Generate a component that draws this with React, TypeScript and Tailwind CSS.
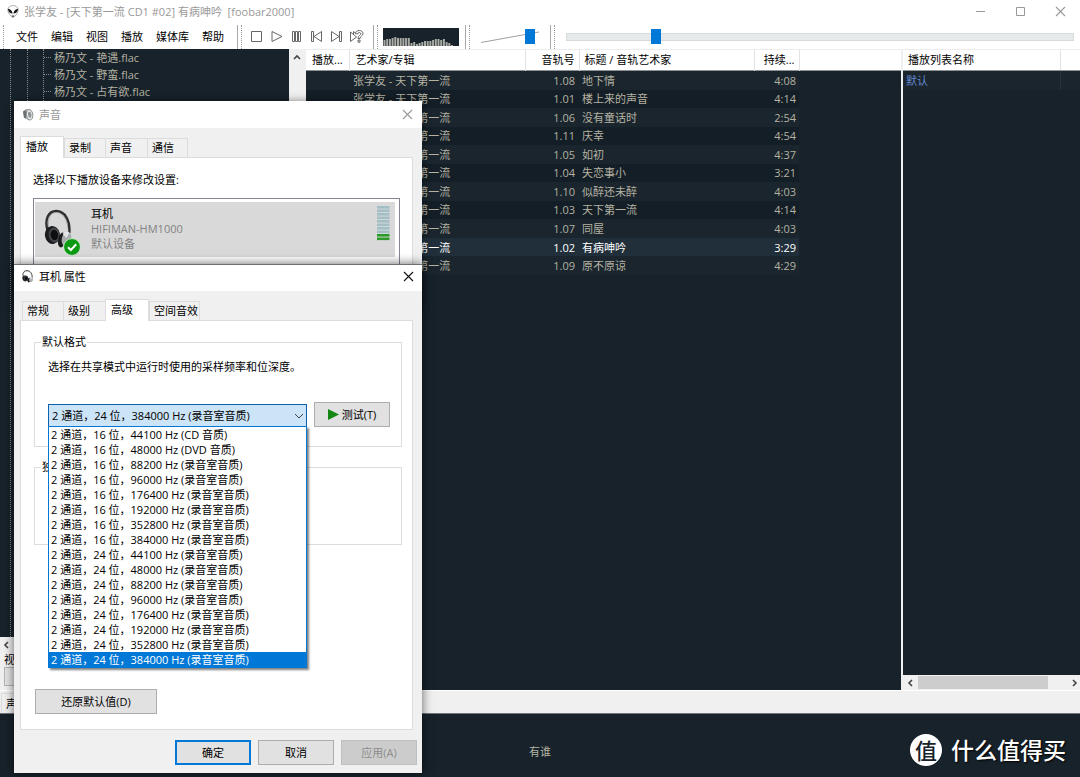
import React from "react";

type Track = { no: string; title: string; time: string; playing?: boolean };

const tracks: Track[] = [
  { no: "1.08", title: "地下情", time: "4:08" },
  { no: "1.01", title: "楼上来的声音", time: "4:14" },
  { no: "1.06", title: "没有童话时", time: "2:54" },
  { no: "1.11", title: "庆幸", time: "4:54" },
  { no: "1.05", title: "如初", time: "4:37" },
  { no: "1.04", title: "失恋事小", time: "3:21" },
  { no: "1.10", title: "似醉还未醉", time: "4:03" },
  { no: "1.03", title: "天下第一流", time: "4:14" },
  { no: "1.07", title: "同屋", time: "4:03" },
  { no: "1.02", title: "有病呻吟", time: "3:29", playing: true },
  { no: "1.09", title: "原不原谅", time: "4:29" },
];

const studioRates = ["88200", "96000", "176400", "192000", "352800", "384000"];
const formats: string[] = [
  "2 通道，16 位，44100 Hz (CD 音质)",
  "2 通道，16 位，48000 Hz (DVD 音质)",
  ...studioRates.map((r) => `2 通道，16 位，${r} Hz (录音室音质)`),
  ...["44100", "48000", ...studioRates].map((r) => `2 通道，24 位，${r} Hz (录音室音质)`),
];
const selectedFormat = formats[formats.length - 1];

const spectrum = [6, 7, 7, 8, 9, 8, 8, 8, 8, 8, 3, 4, 2, 3, 4, 5, 5, 5, 6, 7, 7, 6, 7, 4, 3, 1];

function AlienIcon() {
  return (
    <svg width="12" height="13" viewBox="0 0 12 13" aria-hidden="true">
      <path d="M6 .6C3 .6.8 2.2.8 4.8c0 2.800 2.600 6.600 5.200 7.600 2.600-1 5.200-4.800 5.200-7.600C11.200 2.200 9 .6 6 .6z" fill="#fff" stroke="#9a9a9a" strokeWidth=".8" />
      <path d="M.9 3.800c2.600.2 4.500 2 4.700 4.800-2.600.1-4.500-1.800-4.700-4.800zM11.100 3.800c-2.600.2-4.500 2-4.700 4.800 2.600.1 4.500-1.800 4.700-4.800z" fill="#1a1a1a" />
      <path d="M4.400 10.600h3.200L6 12.400z" fill="#444" />
    </svg>
  );
}

function SpeakerIcon() {
  return (
    <svg width="12" height="13" viewBox="0 0 12 13" aria-hidden="true">
      <path d="M1 3.500 4 .8l5 .6 2.200 4-.8 4.800-3.600 2.200L2 9.800z" fill="#b9bcbe" />
      <ellipse cx="7.600" cy="6.800" rx="3.200" ry="5.200" fill="#e8eaeb" stroke="#777" strokeWidth=".7" transform="rotate(-8 7.600 6.800)" />
      <ellipse cx="7.700" cy="6.800" rx="1.700" ry="3" fill="#8f9598" transform="rotate(-8 7.700 6.800)" />
      <path d="M1 3.500 4.200 2 4 10.500 2 9.800z" fill="#6c7073" />
    </svg>
  );
}

function Headphones({ width, height }: { width: number; height: number }) {
  return (
    <svg width={width} height={height} viewBox="0 0 32 40" preserveAspectRatio="none" aria-hidden="true">
      <path d="M4 22C0 10 5 2 13 2c9 0 15 9 14 22" fill="none" stroke="#2d2e30" strokeWidth="2.600" />
      <path d="M5 19C3 10 7 3.400 13 3.400c7 0 12 7 12.500 16" fill="none" stroke="#8b8c8e" strokeWidth=".7" />
      <ellipse cx="9" cy="26" rx="8" ry="9" fill="#1c1d1f" transform="rotate(-12 9 26)" />
      <ellipse cx="11" cy="26" rx="6" ry="7.500" fill="#45474a" transform="rotate(-12 11 26)" />
      <ellipse cx="11" cy="26" rx="4" ry="5.200" fill="#0d0e0f" transform="rotate(-12 11 26)" />
      <ellipse cx="19" cy="31" rx="4" ry="7.500" fill="#1b1c1e" transform="rotate(12 19 31)" />
      <ellipse cx="24" cy="30" rx="5" ry="7.500" fill="#a9acaf" transform="rotate(14 24 30)" />
      <path d="M20 25c2-3 6-3 7-1l-3 5z" fill="#e2e4e6" />
    </svg>
  );
}

function CheckBadge() {
  return (
    <svg width="18" height="18" viewBox="0 0 18 18" aria-hidden="true">
      <circle cx="9" cy="9" r="8.400" fill="#0c9a12" stroke="#dff0df" strokeWidth=".8" />
      <path d="m5 9.200 2.900 2.800L13.200 6.300" fill="none" stroke="#fff" strokeWidth="2" />
    </svg>
  );
}

function Cross({ color }: { color: string }) {
  return (
    <svg width="11" height="11" viewBox="0 0 11 11" aria-hidden="true">
      <path d="m1 1 9 9M10 1l-9 9" stroke={color} strokeWidth="1.100" />
    </svg>
  );
}

function Chevron({ dir }: { dir: "left" | "right" | "up" | "down" }) {
  const paths = { left: "M7 2 4 5l3 3", right: "m3 2 3 3-3 3", up: "m2 7 3-3 3 3", down: "m1 3 4 4 4-4" };
  return (
    <svg width="10" height="10" viewBox="0 0 10 10" aria-hidden="true">
      <path d={paths[dir]} fill="none" stroke="#444" strokeWidth={dir === "down" ? 1 : 1.600} />
    </svg>
  );
}

function Gripper({ bar = true }: { bar?: boolean }) {
  return (
    <div aria-hidden="true" className="flex h-6 shrink-0 items-stretch gap-[3px]">
      {bar && <div className="w-px bg-[#a8a8a8]" />}
      <div className="border-l border-dotted border-[#9a9a9a]" />
    </div>
  );
}

const transport: { label: string; art: React.ReactNode }[] = [
  { label: "停止", art: <path d="M1.500 1.500h10v10h-10z" /> },
  { label: "播放", art: <path d="M2 1.500v10L12 6.500z" /> },
  { label: "暂停", art: <path d="M2.500 1.500h2v10h-2zM5.500 1.500h2v10h-2zM8.500 1.500h2v10h-2z" /> },
  { label: "上一首", art: <path d="M1.500 1.500h2v10h-2zM11.500 1.500v10L4 6.500z" /> },
  { label: "下一首", art: <path d="M9.500 1.500h2v10h-2zM1.500 1.500v10L9 6.500z" /> },
  {
    label: "随机",
    art: (
      <>
        <path d="M.5 2v9.500L6.500 7zM3.500 4V1.500l2.500 2" />
        <path d="M5.500 3.500c0-4 7.500-4 7.500 0 0 2.500-3 2.500-3 5H8c0-3 2.800-3.200 2.800-4.800 0-1.600-3-1.600-3 .3zM8 10h2v2.200H8z" />
      </>
    ),
  },
];

function Toolbar() {
  return (
    <div className="flex h-[25px] shrink-0 items-center bg-white">
      <div className="flex w-[237px] shrink-0 items-center pl-[3px]">
        <Gripper bar={false} />
        <nav className="flex gap-[13px] pl-3 text-black">
          {["文件", "编辑", "视图", "播放", "媒体库", "帮助"].map((m) => (
            <button key={m} type="button">{m}</button>
          ))}
        </nav>
      </div>
      <div className="flex w-[136px] shrink-0 items-center">
        <Gripper />
        <div className="flex pl-[5px]">
          {transport.map((t) => (
            <button key={t.label} type="button" aria-label={t.label} className="flex h-5 w-[20px] items-center justify-center">
              <svg width="14" height="13" viewBox="0 0 14 13" fill="none" stroke="#666" strokeWidth="1">{t.art}</svg>
            </button>
          ))}
        </div>
      </div>
      <div className="flex w-[92px] shrink-0 items-center">
        <Gripper />
        <svg className="ml-[5px]" width="76" height="18" viewBox="0 0 76 18" aria-hidden="true">
          <path d="M0 0h76v18H0z" fill="#17222a" />
          {spectrum.map((h, i) => (
            <rect key={i} x={i * 2.700 + 0.500} y={18 - h} width="2" height={h} fill="#a9aba4" />
          ))}
        </svg>
      </div>
      <div className="flex w-[85px] shrink-0 items-center">
        <Gripper />
        <div className="relative ml-[11px] h-[15px] w-[60px]">
          <svg className="h-[15px] w-[60px]" viewBox="0 0 60 15" aria-hidden="true">
            <path d="M0 13.500 58 3" stroke="#a0a0a0" />
          </svg>
          <input
            type="range"
            aria-label="音量"
            defaultValue={88}
            className="absolute inset-0 h-[15px] w-[60px] appearance-none bg-transparent [&::-webkit-slider-thumb]:h-[15px] [&::-webkit-slider-thumb]:w-[10px] [&::-webkit-slider-thumb]:appearance-none [&::-webkit-slider-thumb]:bg-[#0078d7]"
          />
        </div>
      </div>
      <div className="flex min-w-0 flex-1 items-center pr-[6px]">
        <Gripper />
        <input
          type="range"
          aria-label="播放进度"
          defaultValue={17}
          step={0.5}
          className="ml-[11px] h-[8px] min-w-0 flex-1 appearance-none border border-[#d6dada] bg-[#e7eaea] [&::-webkit-slider-thumb]:h-[15px] [&::-webkit-slider-thumb]:w-[10px] [&::-webkit-slider-thumb]:appearance-none [&::-webkit-slider-thumb]:bg-[#0078d7]"
        />
      </div>
    </div>
  );
}

function LibraryTree() {
  return (
    <div className="flex w-[306px] shrink-0 flex-col bg-[#f0f0f0]">
      <div className="flex min-h-0 flex-1">
        <div className="flex flex-1 bg-[#17222a] pl-[10px]">
          <div className="w-[17px] border-l border-dotted border-[#87898a]" />
          <div className="w-4 border-l border-dotted border-[#87898a]" />
          <ul className="flex-1 border-l border-dotted border-[#87898a] text-[#b4b2a3]">
            {["艳遇", "野蛮", "占有欲"].map((s) => (
              <li key={s} className="flex h-[17px] items-center gap-[3px]">
                <span className="w-[7px] border-t border-dotted border-[#87898a]" />
                杨乃文 - {s}.flac
              </li>
            ))}
          </ul>
        </div>
        <div className="w-[17px] pt-[3px] pl-[3px]"><Chevron dir="up" /></div>
      </div>
      <div className="flex h-[15px] items-center pl-px"><Chevron dir="left" /></div>
      <div className="h-[15px] pl-1 leading-[15px]">视图</div>
      <div className="flex h-[23px] pl-1">
        <button type="button" aria-label="视图选择" className="h-[19px] w-[120px] border border-[#b5b5b5] bg-[#e4e4e4]" />
      </div>
    </div>
  );
}

const headCell = "border-r border-[#e2e2e2] font-normal";

function Playlist() {
  return (
    <div className="flex min-w-0 flex-1 flex-col bg-[#17222a]">
      <div className="bg-white">
        <div className="h-[22px] border-t border-b border-t-[#ececec] border-b-[#8d9295]" />
      </div>
      <table className="-mt-[22px] w-[493px] table-fixed border-collapse">
        <colgroup>
          <col className="w-[43px]" />
          <col className="w-[176px]" />
          <col className="w-[54px]" />
          <col className="w-[175px]" />
          <col className="w-[45px]" />
        </colgroup>
        <thead>
          <tr className="h-[22px] whitespace-nowrap text-black">
            <th className={`${headCell} pb-[2px] pl-[6px] text-left`}>播放...</th>
            <th className={`${headCell} pb-[2px] pl-[6px] text-left`}>艺术家/专辑</th>
            <th className={`${headCell} pr-1 pb-[2px] text-right`}>音轨号</th>
            <th className={`${headCell} pb-[2px] pl-[5px] text-left`}>标题 / 音轨艺术家</th>
            <th className={`${headCell} pr-1 pb-[2px] text-right`}>持续...</th>
          </tr>
        </thead>
      </table>
      <table className="h-[204px] w-[493px] table-fixed border-collapse">
        <colgroup>
          <col className="w-[43px]" />
          <col className="w-[176px]" />
          <col className="w-[54px]" />
          <col className="w-[175px]" />
          <col className="w-[45px]" />
        </colgroup>
        <tbody>
          {tracks.map((t) => (
            <tr
              key={t.no}
              className={t.playing ? "bg-[#212f3b] text-white" : "text-[#b4b2a3] odd:bg-[#1a252d] even:bg-[#141e26]"}
            >
              <td className="p-0" />
              <td className="p-0 pl-1">张学友 - 天下第一流</td>
              <td className="p-0 pr-1 text-right">{t.no}</td>
              <td className="p-0 pl-[3px]">{t.title}</td>
              <td className="p-0 pr-[3px] text-right">{t.time}</td>
            </tr>
          ))}
        </tbody>
      </table>
    </div>
  );
}

function PlaylistManager() {
  return (
    <div className="ml-[2px] flex w-[177px] shrink-0 flex-col">
      <div className="flex h-[22px] items-center border-t border-b border-t-[#ececec] border-b-[#8d9295] bg-white text-black">
        <span className="flex h-full flex-1 items-center border-r border-[#e2e2e2] pb-px pl-[5px]">播放列表名称</span>
        <span className="w-[19px]" />
      </div>
      <div className="flex-1 bg-[#17222a]">
        <div className="flex h-[19px] items-center bg-[#1a252d] text-[#6487cf]">
          <span className="flex h-full flex-1 items-center border-r border-[#27323a] pl-[3px]">默认</span>
          <span className="w-[19px]" />
        </div>
      </div>
      <div className="flex h-[15px] items-center bg-[#f0f0f0] pl-[2px]">
        <Chevron dir="left" />
        <div className="ml-[3px] h-[13px] w-[130px] bg-[#cdcdcd]" />
        <div className="flex flex-1 justify-end"><Chevron dir="right" /></div>
      </div>
    </div>
  );
}

function Tabs({ items, active, inset }: { items: { name: string; width: string }[]; active: string; inset: string }) {
  return (
    <div role="tablist" className={`flex items-end ${inset}`}>
      {items.map((t) =>
        t.name === active ? (
          <button key={t.name} type="button" role="tab" aria-selected="true" className={`relative z-10 -mb-px h-[22px] border border-b-0 border-[#dcdcdc] bg-white pb-[3px] pl-[5px] text-left ${t.width}`}>
            {t.name}
          </button>
        ) : (
          <button key={t.name} type="button" role="tab" aria-selected="false" className={`h-[19px] border border-b-0 border-[#dcdcdc] bg-[#f0f0f0] pb-[2px] pl-1 text-left whitespace-nowrap not-last:border-r-0 ${t.width}`}>
            {t.name}
          </button>
        ),
      )}
    </div>
  );
}

function SoundDialog() {
  return (
    <section aria-label="声音" className="absolute top-[101px] left-[14px] w-[408px] bg-[#f0f0f0] pb-4 text-black shadow-[0_0_8px_rgba(0,0,0,0.45)]">
      <header className="flex h-[27px] items-center gap-[5px] bg-white pr-[9px] pb-px pl-2 text-[#999]">
        <SpeakerIcon />
        <h2 className="flex-1">声音</h2>
        <button type="button" aria-label="关闭"><Cross color="#999" /></button>
      </header>
      <div className="pt-2 pr-[9px] pl-[6px]">
        <Tabs
          active="播放"
          inset=""
          items={[
            { name: "播放", width: "w-[44px]" },
            { name: "录制", width: "w-[41px]" },
            { name: "声音", width: "w-[42px]" },
            { name: "通信", width: "w-[41px]" },
          ]}
        />
        <div className="border border-[#dcdcdc] bg-white pt-[14px] pr-3 pb-4 pl-3">
          <p className="leading-4">选择以下播放设备来修改设置:</p>
          <div className="mt-[10px] border border-[#828790] pt-[3px] pr-1 pb-4 pl-px">
            <div className="flex h-[55px] bg-[#d9d9d9] pr-[5px] pl-[9px]">
              <div className="relative mt-[7px] w-[47px]">
                <Headphones width={30} height={40} />
                <div className="absolute top-[29px] left-[19px]"><CheckBadge /></div>
              </div>
              <div className="flex-1 pt-[4px] leading-[15px] text-[#838383]">
                <p className="text-black">耳机</p>
                <p>HIFIMAN-HM1000</p>
                <p>默认设备</p>
              </div>
              <svg className="mt-1" width="13" height="35" viewBox="0 0 13 35" aria-hidden="true">
                {Array.from({ length: 10 }, (_, i) => (
                  <rect key={i} x="0" y={i * 3.500} width="12.500" height="2.600" fill={i < 8 ? "#a3bfc6" : "#2b9a2b"} />
                ))}
              </svg>
            </div>
          </div>
        </div>
      </div>
    </section>
  );
}

function FormatPicker() {
  return (
    <div className="relative w-[259px]">
      <select
        aria-label="默认格式"
        defaultValue={selectedFormat}
        className="block h-[23px] w-full appearance-none border border-[#0a62ad] bg-[#cce4f7] pl-[3px] text-black"
      >
        {formats.map((f) => (
          <option key={f}>{f}</option>
        ))}
      </select>
      <div className="pointer-events-none absolute top-[7px] right-[3px]"><Chevron dir="down" /></div>
      <ul role="listbox" className="absolute top-[22px] left-0 z-20 w-full border border-[#0078d7] bg-white leading-[15px] whitespace-nowrap shadow-[2px_2px_2px_rgba(0,0,0,0.5)]">
        {formats.map((f) => (
          <li
            key={f}
            role="option"
            aria-selected={f === selectedFormat}
            className={`h-[15px] pl-[2px] ${f === selectedFormat ? "bg-[#0078d7] text-white" : ""}`}
          >
            {f}
          </li>
        ))}
      </ul>
    </div>
  );
}

function PropertiesDialog() {
  return (
    <section aria-label="耳机 属性" className="absolute top-[264px] left-[14px] w-[408px] border-t border-[#707070] bg-[#f0f0f0] text-black shadow-[0_0_10px_rgba(0,0,0,0.6)]">
      <header className="flex h-[26px] items-center gap-[5px] bg-white pr-2 pb-[3px] pl-2">
        <Headphones width={12} height={13} />
        <h2 className="flex-1">耳机 属性</h2>
        <button type="button" aria-label="关闭"><Cross color="#111" /></button>
      </header>
      <div className="pt-2 pr-[5px] pb-2 pl-[6px]">
        <div className="pr-[4px]">
          <Tabs
            active="高级"
            inset="pl-[2px]"
            items={[
              { name: "常规", width: "w-[41px]" },
              { name: "级别", width: "w-[42px]" },
              { name: "高级", width: "w-[44px]" },
              { name: "空间音效", width: "w-[51px]" },
            ]}
          />
          <div className="border border-[#dcdcdc] bg-white pt-[14px] pr-[10px] pb-[15px] pl-[13px]">
            <fieldset className="h-[112px] border border-[#dcdcdc] pl-[13px]">
              <legend className="-ml-[7px] px-px leading-[14px]">默认格式</legend>
              <p className="pt-[10px] leading-4">选择在共享模式中运行时使用的采样频率和位深度。</p>
              <div className="mt-[27px] flex h-[25px] items-end gap-[7px]">
                <FormatPicker />
                <button type="button" className="flex h-[25px] w-[76px] items-center justify-center gap-[3px] border border-[#adadad] bg-[#e1e1e1]">
                  <svg width="11" height="11" viewBox="0 0 11 11" aria-hidden="true"><path d="M0 0v11L11 5.500z" fill="#138713" /></svg>
                  测试(T)
                </button>
              </div>
            </fieldset>
            <fieldset className="mt-[13px] h-[85px] border border-[#dcdcdc] pl-[13px]">
              <legend className="-ml-[7px] px-px leading-[14px]">独占模式</legend>
            </fieldset>
            <button type="button" className="mt-[144px] ml-px block h-[25px] w-[122px] border border-[#adadad] bg-[#e1e1e1] pb-px">还原默认值(D)</button>
          </div>
        </div>
        <div className="flex justify-end gap-[7px] pt-[10px]">
          <button type="button" className="h-[25px] w-[76px] border-2 border-[#0078d7] bg-[#e1e1e1] pb-px">确定</button>
          <button type="button" className="h-[25px] w-[76px] border border-[#adadad] bg-[#e1e1e1] pb-px">取消</button>
          <button type="button" disabled className="h-[25px] w-[76px] border border-[#bfbfbf] bg-[#cccccc] pb-px text-[#8d8d8d]">应用(A)</button>
        </div>
      </div>
    </section>
  );
}

export default function App() {
  return (
    <div
      lang="zh-CN"
      className="relative flex min-h-screen flex-col overflow-hidden bg-[#f0f0f0] font-['Open_Sans','Noto_Sans_CJK_SC',sans-serif] text-[11px] leading-[15px] text-black"
    >
      <header className="flex h-6 shrink-0 items-center bg-white pr-[14px] pb-[2px] pl-[7px] text-[#999]">
        <AlienIcon />
        <h1 className="flex-1 pl-[5px] whitespace-pre">张学友 - [天下第一流 CD1 #02] 有病呻吟  [foobar2000]</h1>
        <div className="flex gap-[29px]">
          <button type="button" aria-label="最小化">
            <svg width="11" height="11" viewBox="0 0 11 11"><path d="M1 5.500h9" stroke="#999" /></svg>
          </button>
          <button type="button" aria-label="最大化">
            <svg width="11" height="11" viewBox="0 0 11 11"><path d="M1.500 1.500h8v8h-8z" fill="none" stroke="#999" /></svg>
          </button>
          <button type="button" aria-label="关闭"><Cross color="#999" /></button>
        </div>
      </header>
      <Toolbar />
      <main className="flex min-h-[641px] flex-1">
        <LibraryTree />
        <Playlist />
        <PlaylistManager />
      </main>
      <div className="flex h-6 shrink-0 items-end border-t border-b border-t-white border-b-[#70767a] pl-px">
        <div className="h-5 w-[60px] border border-b-0 border-[#dcdcdc] pl-1 leading-5">声音</div>
      </div>
      <footer className="relative flex h-[63px] shrink-0 flex-col items-center bg-[#17222a] pt-[30px] text-[#b4b2a3]">
        <p>有谁</p>
        <div className="absolute top-[20px] right-[14px] flex items-center gap-[9px] text-white">
          <span className="flex size-8 items-center justify-center rounded-full bg-white text-[22px] leading-8 font-medium text-[#17222a]">值</span>
          <span className="text-[23px] leading-8 font-medium [text-shadow:1px_1px_2px_#000]">什么值得买</span>
        </div>
      </footer>
      <SoundDialog />
      <PropertiesDialog />
    </div>
  );
}
